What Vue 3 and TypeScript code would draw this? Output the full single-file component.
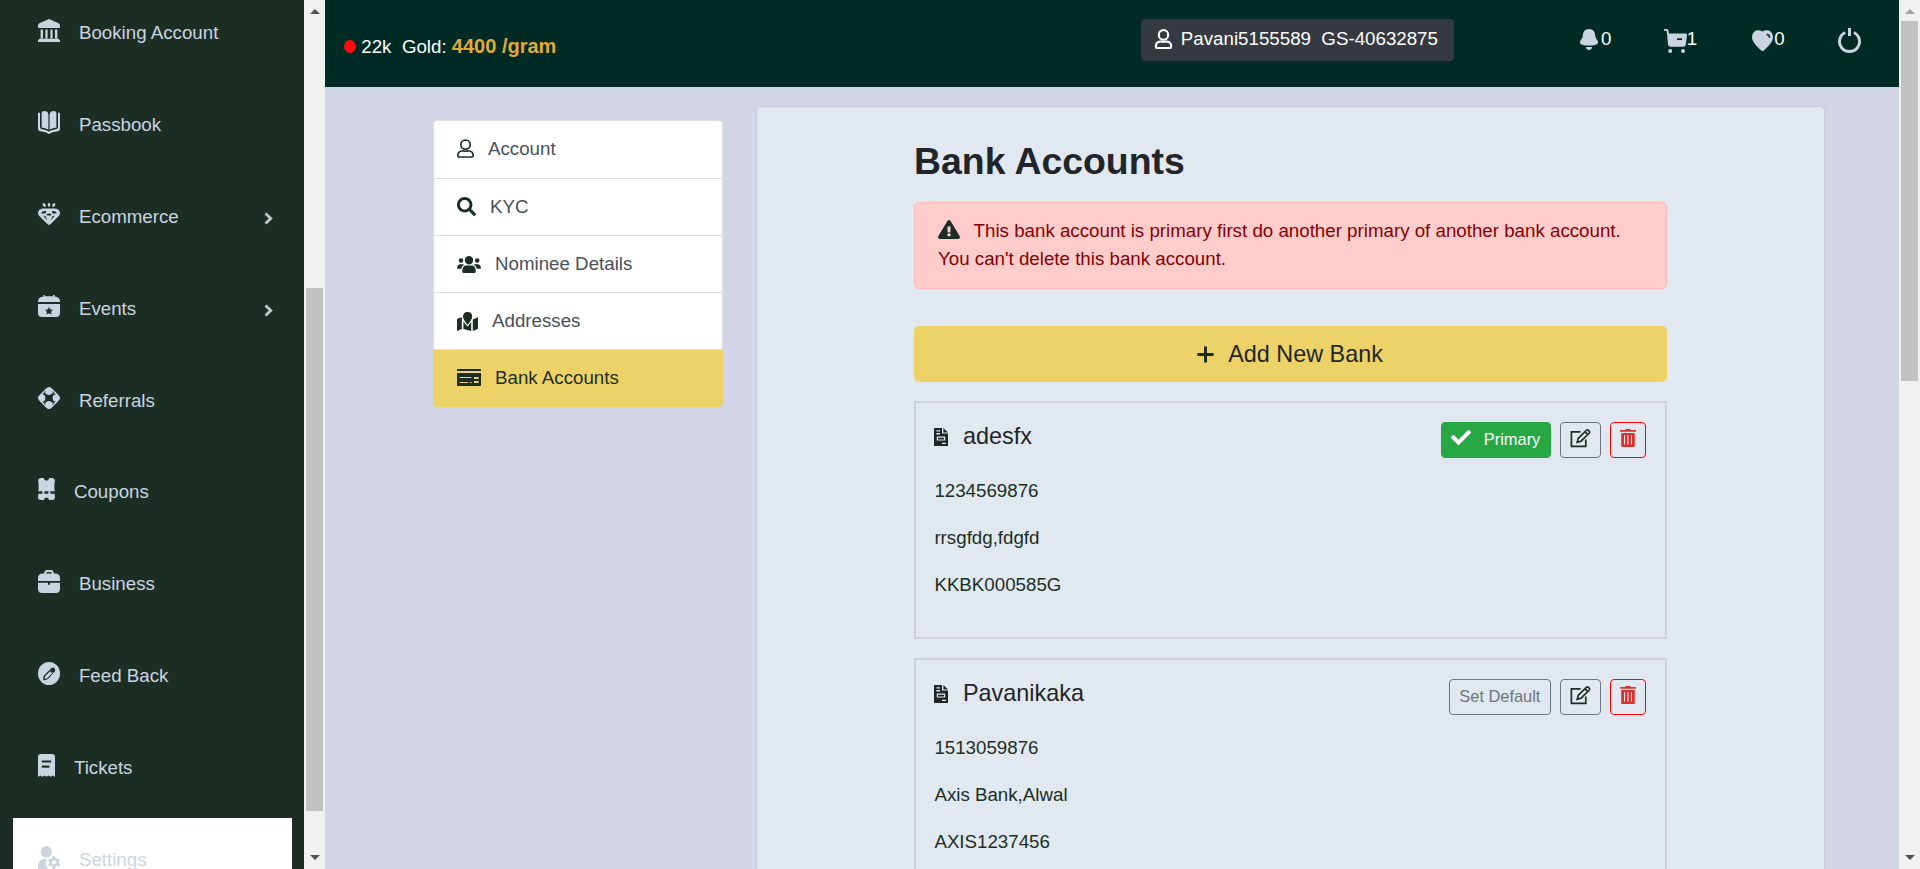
<script setup lang="ts">
import { h } from 'vue'

interface Glyph {
  box: string
  d: string
  stroke?: number
}

const glyphs: Record<string, Glyph> = {
  bank: {
    box: '0 0 22 23',
    d: 'M11 0 L20.6 4.2 Q22 5 22 6.6 V8 Q22 9 21 9 H1 Q0 9 0 8 V6.6 Q0 5 1.4 4.2Z M2.6 10.6H5V20H2.6Z M7.4 10.6H9.6V20H7.4Z M12.4 10.6H14.6V20H12.4Z M17 10.6H19.4V20H17Z M1.5 19.8H20.5L22 21.5V23H0V21.5Z',
  },
  book: {
    box: '0 0 22 23',
    d: 'M3.6 2Q3.8 0 6 0Q9.4 0 10 2V18.4Q7.4 16.8 3.6 16.4Z M18.4 2Q18.2 0 16 0Q12.6 0 12 2V18.4Q14.6 16.8 18.4 16.4Z M0 2 L2 1.6 V16 Q2 17.8 4 18.2 Q8 18.6 11 20.4 Q14 18.6 18 18.2 Q20 17.8 20 16 V1.6 L22 2 V17.4 Q22 20 18.6 20.6 Q14 21 11 23 Q8 21 3.4 20.6 Q0 20 0 17.4Z M10.6 3H11.4V18.6H10.6Z',
  },
  gem: {
    box: '0 0 22 22',
    d: 'M4.4 1.4A1.5 1.3 0 0 1 7 .6L7.8 2.2A1.2 1.2 0 0 1 5.6 3.2Z M11 0Q12.2 0 12.2 1.2V2.4Q12.2 3.6 11 3.6Q9.8 3.6 9.8 2.4V1.2Q9.8 0 11 0Z M17.6 1.4A1.5 1.3 0 0 0 15 .6L14.2 2.2A1.2 1.2 0 0 0 16.4 3.2Z M5 5.4H17Q22 6 22 10.2Q22 12 20 13.8L13 20.8Q11 23 9 20.8L2 13.8Q0 12 0 10.2Q0 6 5 5.4Z M3.2 10.4H7.4L8.2 8Q3.8 7.6 3.2 10.4Z M18.8 10.4H14.6L13.8 8Q18.2 7.6 18.8 10.4Z M8.2 11.4L10.6 10.4H11.4L13.8 11.4L12.6 12.6H9.4Z M5.2 12.6L7.6 13.2L9.2 17.6Z M16.8 12.6L14.4 13.2L12.8 17.6Z',
  },
  calendar: {
    box: '0 0 22 22',
    d: 'M5.5 0H7V1.2H15V0H16.6V1.4Q22 1.6 22 6.6V7H0V6.6Q0 1.6 5.5 1.4Z M0 9H22V17.5Q22 22 18 22H4Q0 22 0 17.5Z M11 11.8L9.8 14.5L6.9 14.8L9 16.8L8.4 19.6L11 18.2L13.6 19.6L13 16.8L15.1 14.8L12.2 14.5Z',
  },
  lifebuoy: {
    box: '0 0 22 22',
    d: 'M11 0Q12.6 0 14 1.6L20.4 8Q22 9.6 22 11Q22 12.4 20.4 14L14 20.4Q12.6 22 11 22Q9.4 22 8 20.4L1.6 14Q0 12.6 0 11Q0 9.4 1.6 8L8 1.6Q9.4 0 11 0Z M7.2 6Q9 8 11 8Q13 8 14.8 6L16.2 7.2Q14.6 8.8 14.6 11Q14.6 13.2 16.2 14.8L14.8 16Q13 14 11 14Q9 14 7.2 16L5.8 14.8Q7.4 13.2 7.4 11Q7.4 8.8 5.8 7.2Z M4.6 7.6L7 4.2L7.8 4.8L5 8.2Z M17.4 7.6L15 4.2L14.2 4.8L17 8.2Z M4.6 14.4L7 17.8L7.8 17.2L5 13.8Z M17.4 14.4L15 17.8L14.2 17.2L17 13.8Z',
  },
  coupon: {
    box: '0 0 17 22',
    d: 'M2.5 0H5.8Q6.2 2.7 8.5 2.7Q10.8 2.7 11.2 0H14.5Q17 .4 17 3L16.4 5V11.5L17 13.2H0L.6 11.5V5L0 3Q0 .4 2.5 0Z M.4 15.7H16.6L17 19Q17 22 14 22H11.2Q10.8 19.4 8.5 19.4Q6.2 19.4 5.8 22H3Q0 22 0 19Z M4.4 13.2H6.4V15.7H4.4Z M10.4 13.2H12.4V15.7H10.4Z',
  },
  briefcase: {
    box: '0 0 22 23',
    d: 'M6 3.5Q6.5 0 9 0H13Q15.5 0 16 3.5H18Q22 4 22 8V11H0V8Q0 4 4 3.5Z M8 3.5H14Q13.8 2 12.6 2H9.4Q8.2 2 8 3.5Z M0 12.8H10V14.8H12V12.8H22V18.5Q22 23 18 23H4Q0 23 0 18.5Z',
  },
  pencil: {
    box: '0 0 22 23',
    d: 'M11 0A11 11.5 0 0 1 11 23A11 11.5 0 0 1 11 0Z M13.8 5.8L6.2 13.2Q5 14.6 5.2 18.2Q9 18 10 17L16.8 9.6Q18 7.8 16.4 6.2Q15.2 4.8 13.8 5.8Z M12.8 8.4L15 10.4L9.2 16.2Q8.4 16.8 6.8 16.8Q6.6 15 7.4 14Z M12 9.8L13.2 8.8L14.4 10L13.4 11Z',
  },
  receipt: {
    box: '0 0 17 23',
    d: 'M3 0H14Q17 0 17 3V23L14.8 21.4L12.8 22.8L10.6 21.4L8.5 22.8L6.4 21.4L4.2 22.8L2.2 21.4L0 23V3Q0 0 3 0Z M3.8 6.4V8.6H13.2V6.4Z M3.8 11.6V13.8H11.4V11.6Z',
  },
  usercog: {
    box: '0 0 22 23',
    d: 'M8.4 0A5.6 5.8 0 0 1 8.4 11.6A5.6 5.8 0 0 1 8.4 0Z M0 23V20Q0 14 6 13H9Q7.4 16.4 8.4 20Q9 22 10.4 23Z M15 10H17L17.6 12.2L19.3 13.1L21.4 12.4L22 14L20.7 15.8V17L22 18.8L21.4 20.2L19.3 19.8L17.6 20.8L17 23H15L14.4 20.8L12.8 19.8L10.8 20.2L10.2 18.8L11.4 17V15.8L10.2 14L10.8 12.4L12.8 13.1L14.4 12.2Z M16 14.4A2.1 2.1 0 0 0 16 18.6A2.1 2.1 0 0 0 16 14.4Z',
  },
  chevron: { box: '0 0 9 13', d: 'M1.5 1.5L6.8 6.5L1.5 11.5', stroke: 2.8 },
  user: {
    box: '0 0 17 20',
    d: 'M8.5 1A4.6 4.8 0 0 1 8.5 10.8A4.6 4.8 0 0 1 8.5 1Z M5 12.6Q6.6 12.4 8.5 13Q10.4 12.4 12 12.6Q16.1 13 16.1 17.2V18Q16.1 19 15.1 19H1.9Q.9 19 .9 18V17.2Q.9 13 5 12.6Z',
    stroke: 1.7,
  },
  userBold: {
    box: '0 0 17 20',
    d: 'M8.5 1A4.6 4.8 0 0 1 8.5 10.8A4.6 4.8 0 0 1 8.5 1Z M5 12.6Q6.6 12.4 8.5 13Q10.4 12.4 12 12.6Q16.1 13 16.1 17.2V18Q16.1 19 15.1 19H1.9Q.9 19 .9 18V17.2Q.9 13 5 12.6Z',
    stroke: 2.1,
  },
  bell: {
    box: '0 0 18 21',
    d: 'M9 0Q15 .4 15.2 6.6Q15.4 9.4 17.2 11Q18 12.2 18 13.8Q17.8 16.6 9 16.6Q.2 16.6 0 13.8Q0 12.2 .8 11Q2.6 9.4 2.8 6.6Q3 .4 9 0Z M5.8 18H12.2Q11.6 21 9 21Q6.4 21 5.8 18Z',
  },
  cart: {
    box: '0 0 23 24',
    d: 'M0 0H2.6Q4.4 .2 4.6 2L5 4.4H21.6Q23 4.6 23 6L21.8 15.4Q21.4 17.6 19.6 17.8H6.2Q4.4 17.6 4 15.6L2.8 2.6Q2.6 1.8 2 1.8H0Z M13 9.2V11H18V9.2Z M6.2 20A2 2 0 0 1 6.2 24A2 2 0 0 1 6.2 20Z M19 20A2 2 0 0 1 19 24A2 2 0 0 1 19 20Z',
  },
  heart: {
    box: '0 0 21 21',
    d: 'M10.5 1.6Q7.4-.6 4 .6Q0 2.4 0 7.8Q0 12.4 8.6 20Q10.5 21.8 12.4 20Q21 12.4 21 7.8Q21 2.4 17 .6Q13.6-.6 10.5 1.6Z M14.6 3.6Q18.4 4 18.4 8L16.8 7.8Q17 5.6 14.6 5.2Z',
  },
  power: {
    box: '0 0 23 25',
    d: 'M7.2 4.5A10 10 0 1 0 15.8 4.5',
    stroke: 2.9,
  },
  search: {
    box: '0 0 512 512',
    d: 'M505 442.7L405.3 343c-4.5-4.5-10.6-7-17-7H372c27.6-35.3 44-79.7 44-128C416 93.1 322.9 0 208 0S0 93.1 0 208s93.1 208 208 208c48.3 0 92.7-16.4 128-44v16.3c0 6.4 2.5 12.5 7 17l99.7 99.7c9.4 9.4 24.6 9.4 33.9 0l28.3-28.3c9.4-9.4 9.4-24.6.1-34zM208 336c-70.7 0-128-57.2-128-128 0-70.7 57.2-128 128-128 70.7 0 128 57.2 128 128 0 70.7-57.2 128-128 128z',
  },
  group: {
    box: '0 0 24 17',
    d: 'M12 0A4.2 4.2 0 0 1 12 8.4A4.2 4.2 0 0 1 12 0Z M4 2.2A2.3 2.3 0 0 1 4 6.8A2.3 2.3 0 0 1 4 2.2Z M20.2 2.2A2.3 2.3 0 0 1 20.2 6.8A2.3 2.3 0 0 1 20.2 2.2Z M8.4 9.6H15.6Q18.8 10.6 18.8 15.6Q18.8 17 17.6 17H6.4Q5.2 17 5.2 15.6Q5.2 10.6 8.4 9.6Z M2.6 8.2H5.8L7 8.8Q4.6 10.4 4.2 12.8H.8Q0 12.8 0 12Q0 9 2.6 8.2Z M21.4 8.2H18.2L17 8.8Q19.4 10.4 19.8 12.8H23.2Q24 12.8 24 12Q24 9 21.4 8.2Z',
  },
  map: {
    box: '0 0 21 19',
    d: 'M10.6 0Q15.2 .2 15.2 4.6Q15.2 7.6 10.6 13Q6 7.6 6 4.6Q6 .2 10.6 0Z M0 7.8Q0 7 .8 6.6L4.8 5.2V17L0 19Z M6.4 9.2Q8.4 12.4 10.6 14.6Q12.8 12.4 14.2 9.8V19L6.4 17Z M15.8 7.4L21 5.2V16Q21 16.8 20.2 17.2L15.8 18.9Z',
  },
  card: {
    box: '0 0 24 17',
    d: 'M.8 0H23.2Q24 0 24 .8V2H0V.8Q0 0 .8 0Z M0 4H24V16.2Q24 17 23.2 17H.8Q0 17 0 16.2Z M2.6 8V9H14.6V8Z M2.6 13V14H10.8V13Z M17 8V10H21.6V8Z M17 12V14H21.6V12Z M12.6 13V14H14.6V13Z',
  },
  warning: {
    box: '0 0 576 512',
    d: 'M569.5 440C588 472 564.8 512 527.9 512H48.1c-37 0-60-40-41.6-72L246.4 24c18.5-32 64.7-32 83.2 0zM288 354c-25.4 0-46 20.6-46 46s20.6 46 46 46 46-20.6 46-46-20.6-46-46-46zm-43.7-165.3l7.4 136c.4 6.3 5.6 11.3 12 11.3h48.5c6.4 0 11.7-5 12-11.3l7.5-136c.3-6.9-5.1-12.7-12-12.7h-63.4c-6.9 0-12.4 5.8-12 12.7z',
  },
  plus: { box: '0 0 17 17', d: 'M8.5 .4V16.6M.4 8.5H16.6', stroke: 3 },
  check: {
    box: '0 66 512 382',
    d: 'M173.9 439.4l-166.4-166.4c-10-10-10-26.2 0-36.2l36.2-36.2c10-10 26.2-10 36.2 0L192 312.7 432.1 72.6c10-10 26.2-10 36.2 0l36.2 36.2c10 10 10 26.2 0 36.2l-294.4 294.4c-10 10-26.2 10-36.2 0z',
  },
  file: {
    box: '0 0 14 18',
    d: 'M0 0H8V5.6H14V18H0Z M9.4 0L14 4.4H9.4Z M2.4 2.2V3.6H6V2.2Z M2.4 5V6.4H6V5Z M2.8 8.6V12.6H11.2V8.6Z M4 9.8H10V11.4H4Z M8 14.8V16H12V14.8Z',
  },
  edit: {
    box: '0 0 21 19',
    d: 'M10.6 2.8H1.4V17.4H15.8V10.6M8.2 9.4L16.6 1.2Q17.6 .5 18.8 1.6Q20.2 3 19.4 4L11 12.2L7.2 13.2ZM15 2.8L17.9 5.6',
    stroke: 1.7,
  },
  trash: {
    box: '0 0 16 18',
    d: 'M5.5 0H10.5V1H16V2.8H0V1H5.5Z M1.2 4H14.8V16.8Q14.8 18 13.6 18H2.4Q1.2 18 1.2 16.8Z M4 6.2V15.6H5V6.2Z M7.4 6.2V15.6H8.5V6.2Z M11 6.2V15.6H12V6.2Z',
  },
}

const Icon = (props: { name: string; w: number; h: number }) => {
  const g = glyphs[props.name]
  const paint = g.stroke
    ? { fill: 'none', stroke: 'currentColor', 'stroke-width': g.stroke }
    : { fill: 'currentColor', 'fill-rule': 'evenodd' }
  const parts = [h('path', { d: g.d, ...paint })]
  if (props.name === 'power') {
    parts.push(h('path', { d: 'M10 0H13V8H10Z', fill: 'currentColor' }))
  }
  return h(
    'svg',
    { class: 'icon', viewBox: g.box, width: props.w, height: props.h, preserveAspectRatio: 'none', 'aria-hidden': 'true' },
    parts,
  )
}
Icon.props = ['name', 'w', 'h']

const menu = [
  { label: 'Booking Account', icon: 'bank', w: 22, h: 23 },
  { label: 'Passbook', icon: 'book', w: 22, h: 23 },
  { label: 'Ecommerce', icon: 'gem', w: 22, h: 22, more: true },
  { label: 'Events', icon: 'calendar', w: 22, h: 22, more: true },
  { label: 'Referrals', icon: 'lifebuoy', w: 22, h: 22 },
  { label: 'Coupons', icon: 'coupon', w: 17, h: 22 },
  { label: 'Business', icon: 'briefcase', w: 22, h: 23 },
  { label: 'Feed Back', icon: 'pencil', w: 22, h: 23 },
  { label: 'Tickets', icon: 'receipt', w: 17, h: 23 },
  { label: 'Settings', icon: 'usercog', w: 22, h: 23, active: true },
]

const sections = [
  { label: 'Account', icon: 'user', w: 17, h: 19 },
  { label: 'KYC', icon: 'search', w: 19, h: 19 },
  { label: 'Nominee Details', icon: 'group', w: 24, h: 17 },
  { label: 'Addresses', icon: 'map', w: 21, h: 19 },
  { label: 'Bank Accounts', icon: 'card', w: 24, h: 17, active: true },
]

const accounts = [
  { holder: 'adesfx', number: '1234569876', bank: 'rrsgfdg,fdgfd', ifsc: 'KKBK000585G', primary: true },
  { holder: 'Pavanikaka', number: '1513059876', bank: 'Axis Bank,Alwal', ifsc: 'AXIS1237456', primary: false },
]
</script>

<template>
  <div class="app">
    <aside class="sidebar">
      <nav class="menu">
        <a v-for="m in menu" :key="m.label" class="menu-item" :class="{ active: m.active }">
          <Icon :name="m.icon" :w="m.w" :h="m.h" />
          <span class="menu-label">{{ m.label }}</span>
          <Icon v-if="m.more" class="more" name="chevron" :w="9" :h="13" />
        </a>
      </nav>
    </aside>
    <div class="scrollbar side-scroll">
      <i class="arrow up"></i><i class="thumb"></i><i class="arrow down"></i>
    </div>

    <div class="main">
      <header class="topbar">
        <div class="rate">
          <i class="dot"></i>
          <span>22k&nbsp; Gold: <b>4400 /gram</b></span>
        </div>
        <div class="tools">
          <div class="profile"><Icon name="userBold" :w="17" :h="20" /><span>Pavani5155589&nbsp; GS-40632875</span></div>
          <a class="tool bell"><Icon name="bell" :w="18" :h="21" />0</a>
          <a class="tool cart"><Icon name="cart" :w="23" :h="24" />1</a>
          <a class="tool heart"><Icon name="heart" :w="21" :h="21" />0</a>
          <a class="tool power"><Icon name="power" :w="23" :h="25" /></a>
        </div>
      </header>

      <div class="content">
        <nav class="sections">
          <a v-for="s in sections" :key="s.label" class="section" :class="{ active: s.active }">
            <Icon :name="s.icon" :w="s.w" :h="s.h" />{{ s.label }}
          </a>
        </nav>

        <section class="panel">
          <h2>Bank Accounts</h2>
          <div class="alert">
            <Icon name="warning" :w="22" :h="19" />This bank account is primary first do another primary of another bank account.<br />You can't delete this bank account.
          </div>
          <button class="add"><Icon name="plus" :w="17" :h="17" />Add New Bank</button>

          <article v-for="a in accounts" :key="a.number" class="account">
            <div class="head">
              <h5><Icon name="file" :w="14" :h="18" />{{ a.holder }}</h5>
              <div class="actions">
                <button v-if="a.primary" class="btn primary"><Icon name="check" :w="20" :h="15" />Primary</button>
                <button v-else class="btn default">Set Default</button>
                <button class="btn edit"><Icon name="edit" :w="21" :h="19" /></button>
                <button class="btn delete"><Icon name="trash" :w="16" :h="18" /></button>
              </div>
            </div>
            <p>{{ a.number }}</p>
            <p>{{ a.bank }}</p>
            <p>{{ a.ifsc }}</p>
          </article>
        </section>
      </div>
    </div>

    <div class="scrollbar page-scroll">
      <i class="arrow up"></i><i class="thumb"></i><i class="arrow down"></i>
    </div>
  </div>
</template>

<style>
html,
body {
  margin: 0;
  overflow: hidden;
}
</style>

<style scoped>
.app {
  display: flex;
  width: 1920px;
  height: 869px;
  overflow: hidden;
  background: #d2d5e6;
  color: #1c2e24;
  font-family: 'Liberation Sans', Arial, sans-serif;
  font-size: 18.73px;
  line-height: 28px;
}
.icon {
  flex: none;
  display: block;
  overflow: visible;
}
.sidebar {
  flex: none;
  width: 304px;
  height: 869px;
  overflow: hidden;
  background: #1c2e24;
}
.menu {
  margin: -8.2px 12px 0 13px;
}
.menu-item {
  box-sizing: border-box;
  display: flex;
  align-items: flex-start;
  height: 91.8px;
  padding: 27.65px 19px 0 25px;
  color: #cbd5e1;
}
.menu-item.active {
  background: #fff;
}
.menu-label {
  margin-left: 18.9px;
}
.more {
  margin: 9px 0 0 auto;
  color: #c4c8c6;
}

.scrollbar {
  flex: none;
  box-sizing: border-box;
  display: flex;
  flex-direction: column;
  align-items: center;
  width: 21px;
  height: 869px;
  padding: 9px 0 9px;
  background: #f1f1f1;
}
.arrow {
  border: 5px solid transparent;
}
.arrow.up {
  border-top: 0;
  border-bottom-color: #505050;
}
.arrow.down {
  margin-top: auto;
  border-bottom: 0;
  border-top-color: #505050;
}
.thumb {
  width: 17px;
  background: #c1c1c1;
}
.side-scroll .thumb {
  height: 523px;
  margin-top: 274px;
}
.page-scroll .thumb {
  height: 360px;
  margin-top: 7px;
}
.page-scroll .arrow.up {
  border-bottom-color: #a3a3a3;
}

.main {
  flex: 1;
  min-width: 0;
}
.topbar {
  box-sizing: border-box;
  display: flex;
  justify-content: space-between;
  height: 87px;
  padding: 19px 38px 0 19px;
  background: #002b25;
  color: #fff;
}
.rate {
  display: flex;
  align-items: center;
  height: 28px;
  margin-top: 13px;
}
.rate b {
  color: #e0a93b;
  font-size: 20px;
}
.dot {
  width: 12px;
  height: 13px;
  margin-right: 5.3px;
  border-radius: 50%;
  background: #ff0b0b;
}
.tools {
  display: flex;
  align-items: flex-start;
}
.profile {
  box-sizing: border-box;
  display: flex;
  width: 313px;
  height: 42px;
  padding: 6.4px 0 0 14px;
  border-radius: 4px;
  background: #343a40;
  white-space: nowrap;
}
.profile .icon {
  margin: 3.5px 9px 0 0;
}
.tool {
  display: flex;
  margin-top: 6.4px;
}
.tool .icon {
  color: #cbd5e1;
}
.bell {
  margin-left: 126.5px;
}
.bell .icon {
  margin: 4px 2.6px 0 0;
}
.cart {
  margin-left: 53px;
}
.cart .icon {
  margin: 3.5px -0.6px 0 0;
}
.heart {
  margin-left: 54.8px;
}
.heart .icon {
  margin: 4.5px 1.2px 0 0;
}
.power {
  margin-left: 53.4px;
}
.power .icon {
  margin-top: 2.5px;
}

.content {
  display: flex;
  align-items: flex-start;
}
.sections {
  box-sizing: border-box;
  flex: none;
  width: 290px;
  margin: 33px 33px 0 108px;
  overflow: hidden;
  border-radius: 5px;
  border-top: 1px solid #dfdfe2;
}
.section {
  box-sizing: border-box;
  display: flex;
  align-items: center;
  gap: 14px;
  height: 57px;
  padding: 0 23px;
  border: 1px solid #dfdfe2;
  border-top: 0;
  background: #fff;
  color: #495057;
}
.section:first-child {
  height: 58px;
  padding-bottom: 2px;
}
.section:nth-child(2) {
  padding-bottom: 1px;
}
.section .icon {
  color: #1c2e24;
}
.section.active {
  padding-bottom: 1px;
  border-color: #edd367;
  background: #edd367;
  color: #1c2e24;
}

.panel {
  box-sizing: border-box;
  flex: none;
  width: 1069px;
  height: 900px;
  margin-top: 19px;
  padding: 32px 157px 0;
  border: 1px solid #c6c9d3;
  border-radius: 5px;
  background: #e1e8ef;
}
h2 {
  margin: 0;
  color: #212529;
  font-size: 37.4px;
  line-height: 45px;
}
.alert {
  box-sizing: border-box;
  height: 87px;
  margin-top: 18px;
  padding: 14px 23px;
  border: 1px solid #ffb8b8;
  border-radius: 5px;
  background: #fcc;
  color: #850000;
  white-space: nowrap;
}
.alert .icon {
  display: inline-block;
  margin-right: 13.6px;
  vertical-align: -2px;
  color: #1c2e24;
}
button {
  font-family: inherit;
}
.add {
  display: flex;
  align-items: center;
  justify-content: center;
  gap: 14px;
  width: 100%;
  height: 56px;
  margin-top: 37px;
  padding: 0 1px 0 0;
  border: 0;
  border-radius: 5px;
  background: #edd367;
  color: #212529;
  font-size: 23.4px;
}
.add .icon {
  color: #1c2e24;
}
.account {
  box-sizing: border-box;
  height: 238px;
  margin-top: 19px;
  padding: 18.6px 18px 0 18.4px;
  border: 2px solid #cfd1d7;
}
.head {
  display: flex;
  justify-content: space-between;
  height: 55.6px;
}
h5 {
  display: flex;
  align-items: center;
  gap: 14.6px;
  height: 28px;
  margin: 0;
  color: #212529;
  font-size: 23.4px;
  font-weight: 400;
}
h5 .icon {
  margin-top: 2px;
}
.actions {
  display: flex;
  gap: 9px;
  height: 36px;
  margin-right: 1px;
}
.btn {
  box-sizing: border-box;
  display: flex;
  align-items: center;
  height: 36px;
  padding: 0 9.33px 1px;
  border: 1px solid #6c757d;
  border-radius: 4px;
  background: transparent;
  color: #6c757d;
  font-size: 16.4px;
}
.btn.default {
  width: 102px;
}
.btn.primary {
  gap: 12.5px;
  width: 110px;
  border-color: #28a745;
  background: #28a745;
  color: #fff;
}
.btn.primary .icon {
  margin-top: -3px;
}
.btn.edit {
  width: 41px;
  color: #1c2e24;
}
.btn.delete {
  width: 36px;
  border-color: #f00;
  color: #d63333;
}
.btn.edit .icon,
.btn.delete .icon {
  margin-top: -2px;
}
p {
  margin: 0 0 19px;
}
</style>
